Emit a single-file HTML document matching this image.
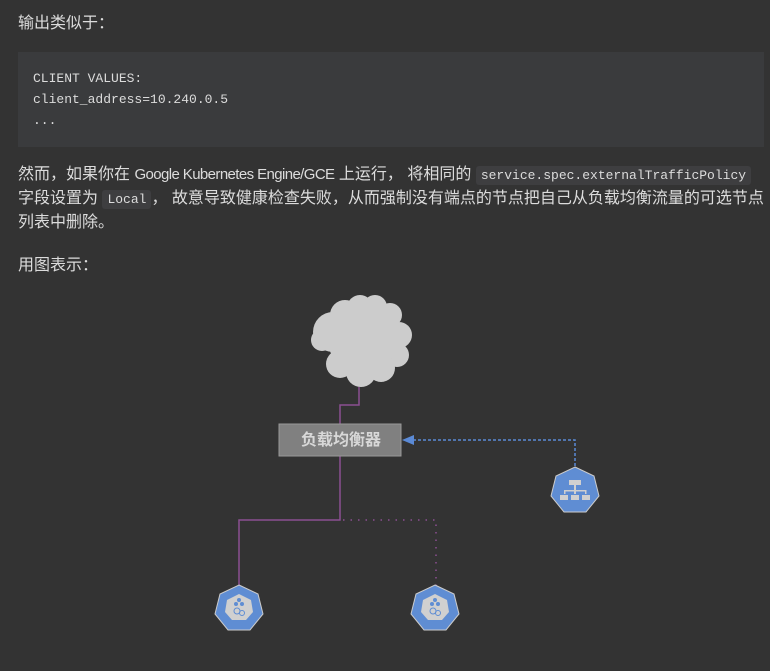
<!DOCTYPE html>
<html><head><meta charset="utf-8"><style>
body{margin:0;background:#333333;width:770px;height:671px;overflow:hidden;position:relative;font-family:"Liberation Sans","Noto Sans CJK SC",sans-serif;color:#dcdcdc;font-size:16px;}
.p{position:absolute;left:18px;line-height:23px;white-space:nowrap;}
.l{letter-spacing:-0.6px;font-size:15px;}
pre{position:absolute;left:18px;top:52px;width:746px;height:95px;margin:0;background:#3a3b3d;box-sizing:border-box;padding:16px 15px;font-family:"Liberation Mono",monospace;font-size:13px;line-height:21px;color:#dcdcdc;}
code{font-family:"Liberation Mono",monospace;font-size:13px;background:#3e3e40;padding:2px 5px;border-radius:3px;}
</style></head><body>
<div class="p" style="top:12px">输出类似于：</div>
<pre>CLIENT VALUES:
client_address=10.240.0.5
...</pre>
<div class="p" style="top:163px;width:752px">然而，如果你在 <span class="l">Google Kubernetes Engine/GCE</span> 上运行， 将相同的 <code>service.spec.externalTrafficPolicy</code><br>字段设置为 <code>Local</code>， 故意导致健康检查失败，从而强制没有端点的节点把自己从负载均衡流量的可选节点<br>列表中删除。</div>
<div class="p" style="top:254px">用图表示：</div>
<svg style="position:absolute;left:0;top:0" width="770" height="671">
<g fill="#cccccc">
<circle cx="333" cy="332" r="20"/><circle cx="345" cy="315" r="15"/><circle cx="360" cy="308" r="13"/><circle cx="375" cy="307" r="12"/><circle cx="390" cy="315" r="12"/><circle cx="399" cy="335" r="13"/><circle cx="397" cy="355" r="12"/><circle cx="381" cy="368" r="14"/><circle cx="361" cy="372" r="15"/><circle cx="340" cy="364" r="14"/><circle cx="322" cy="340" r="11"/><circle cx="360" cy="340" r="32"/>
</g>
<path d="M359 387V405H340V424M340 456V520H239V586" stroke="#8b4f92" stroke-width="1.5" fill="none"/>
<path d="M343 520H436V586" stroke="#8b4f92" stroke-width="1.5" fill="none" stroke-dasharray="1.5 6"/>
<rect x="279" y="424" width="122" height="32" fill="#808080" stroke="#999"/>
<text x="341" y="445" text-anchor="middle" fill="#d8d8d8" font-size="16" font-weight="bold" font-family="Liberation Sans,Noto Sans CJK SC,sans-serif">负载均衡器</text>
<path d="M575 466V440H412" stroke="#5b8ad6" stroke-width="1.5" fill="none" stroke-dasharray="3 2"/>
<path d="M402 440L414 435V445Z" fill="#5b8ad6"/>
<g stroke="#ccc" stroke-width="1" fill="#5f8dd3">
<polygon points="575,467 594,476 599,496 586,512 564,512 551,496 556,476"/>
<polygon points="239,585 258,594 263,614 250,630 228,630 215,614 220,594"/>
<polygon points="435,585 454,594 459,614 446,630 424,630 411,614 416,594"/>
</g>
<g fill="#d0d0d0"><rect x="569" y="480" width="12" height="5"/><rect x="574" y="485" width="2" height="5"/><rect x="564" y="490" width="22" height="1.5"/><rect x="564" y="490" width="1.5" height="4"/><rect x="585" y="490" width="1.5" height="4"/><rect x="574" y="490" width="2" height="4"/><rect x="560" y="495" width="8" height="5"/><rect x="571" y="495" width="8" height="5"/><rect x="582" y="495" width="8" height="5"/></g>
<polygon points="239,594 251,600 253,612 246,620 232,620 225,612 227,600" fill="#d0d0d0"/>
<polygon points="435,594 447,600 449,612 442,620 428,620 421,612 423,600" fill="#d0d0d0"/>
<g fill="#5f8dd3"><circle cx="239" cy="600" r="2"/><circle cx="236" cy="604" r="2"/><circle cx="242" cy="604" r="2"/><circle cx="435" cy="600" r="2"/><circle cx="432" cy="604" r="2"/><circle cx="438" cy="604" r="2"/></g>
<g fill="none" stroke="#5f8dd3" stroke-width="1"><circle cx="237" cy="611" r="3"/><circle cx="242" cy="613" r="2.5"/><circle cx="433" cy="611" r="3"/><circle cx="438" cy="613" r="2.5"/></g>
</svg>
</body></html>
